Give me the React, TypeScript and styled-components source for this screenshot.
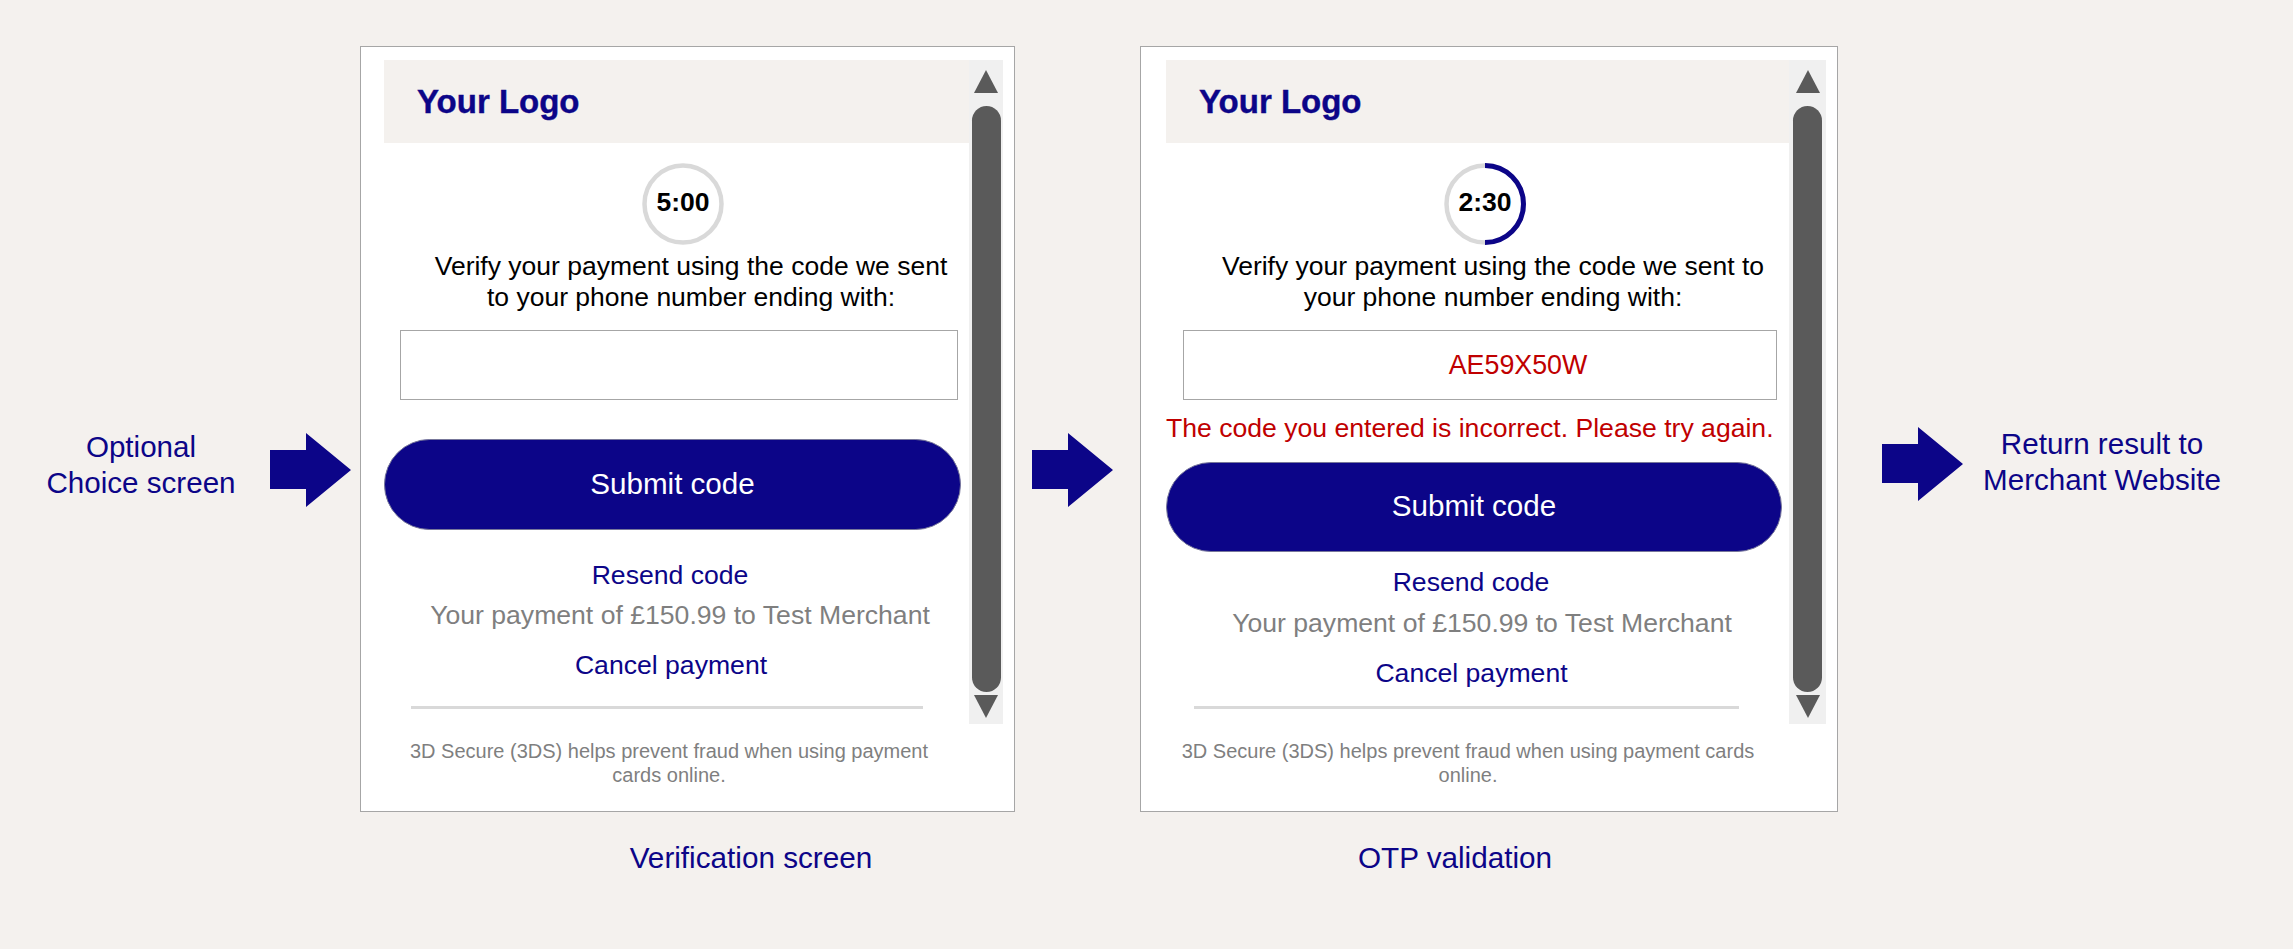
import styled, { createGlobalStyle } from "styled-components";

const NAVY = "#0c0588";
const RED = "#c00000";
const GREY_TEXT = "#7f7f7f";

const GlobalStyle = createGlobalStyle`
  html, body {
    margin: 0;
    padding: 0;
    background: #f4f1ee;
  }
  body {
    font-family: "Liberation Sans", Arial, sans-serif;
  }
  * {
    box-sizing: border-box;
  }
`;

const Page = styled.div`
  width: 2293px;
  height: 949px;
  display: flex;
  align-items: flex-start;
  background: #f4f1ee;
  overflow: hidden;
`;

const SideLabel = styled.div<{ $top: number; $ml: number; $width: number }>`
  margin-top: ${(p) => p.$top}px;
  margin-left: ${(p) => p.$ml}px;
  width: ${(p) => p.$width}px;
  flex-shrink: 0;
  text-align: center;
  color: ${NAVY};
  font-size: 29.6px;
  line-height: 36px;
`;

const ArrowBox = styled.div<{ $top: number; $ml: number }>`
  margin-top: ${(p) => p.$top}px;
  margin-left: ${(p) => p.$ml}px;
  flex-shrink: 0;
  display: flex;
  svg {
    display: block;
  }
`;

const ScreenGroup = styled.div<{ $ml: number; $width: number }>`
  margin-top: 46px;
  margin-left: ${(p) => p.$ml}px;
  width: ${(p) => p.$width}px;
  flex-shrink: 0;
  display: flex;
  flex-direction: column;
`;

const Panel = styled.div<{ $padLeft: number }>`
  height: 766px;
  background: #ffffff;
  border: 1px solid #a6a6a6;
  padding: 13px 11px 0 ${(p) => p.$padLeft}px;
  display: flex;
  flex-direction: column;
`;

const Viewport = styled.div`
  height: 664px;
  display: flex;
  flex-shrink: 0;
`;

const Column = styled.div<{ $width: number }>`
  width: ${(p) => p.$width}px;
  flex-shrink: 0;
  display: flex;
  flex-direction: column;
`;

const LogoBar = styled.div`
  height: 83px;
  background: #f4f1ee;
  display: flex;
  align-items: center;
  padding-left: 33px;
`;

const Logo = styled.div`
  color: ${NAVY};
  font-weight: bold;
  font-size: 33px;
  line-height: 1;
  -webkit-text-stroke: 0.4px ${NAVY};
`;

const Shifted = styled.div<{ $shift: number; $mt: number }>`
  margin-top: ${(p) => p.$mt}px;
  padding-left: ${(p) => (p.$shift > 0 ? p.$shift * 2 : 0)}px;
  padding-right: ${(p) => (p.$shift < 0 ? -p.$shift * 2 : 0)}px;
  display: flex;
  justify-content: center;
`;

const TimerRing = styled.div`
  width: 82px;
  height: 82px;
  display: grid;
  place-items: center;
  svg {
    grid-area: 1 / 1;
  }
`;

const TimerText = styled.span`
  grid-area: 1 / 1;
  font-weight: bold;
  font-size: 26.5px;
  color: #000;
  padding-bottom: 3px;
`;

const Prompt = styled.div`
  text-align: center;
  font-size: 26.5px;
  line-height: 31px;
  color: #000;
`;

const CodeBox = styled.div<{ $ml: number; $width: number; $shift: number }>`
  margin-top: 17px;
  margin-left: ${(p) => p.$ml}px;
  width: ${(p) => p.$width}px;
  height: 70px;
  border: 1.5px solid #a6a6a6;
  display: flex;
  align-items: center;
  justify-content: center;
  padding-left: ${(p) => p.$shift * 2}px;
  color: ${RED};
  font-size: 26.8px;
`;

const ErrorText = styled.div`
  margin-top: 13px;
  font-size: 26.6px;
  line-height: 31px;
  color: ${RED};
  white-space: nowrap;
`;

const SubmitButton = styled.button<{ $mt: number; $width: number; $height: number }>`
  margin-top: ${(p) => p.$mt}px;
  width: ${(p) => p.$width}px;
  height: ${(p) => p.$height}px;
  border-radius: ${(p) => p.$height / 2}px;
  border: 1px solid #77779a;
  background: ${NAVY};
  color: #ffffff;
  font-family: "Liberation Sans", Arial, sans-serif;
  font-size: 29.6px;
  padding: 0 0 2px;
  cursor: pointer;
`;

const LineText = styled.span<{ $muted?: boolean }>`
  font-size: 26.6px;
  line-height: 31px;
  color: ${(p) => (p.$muted ? GREY_TEXT : NAVY)};
  white-space: nowrap;
`;

const Divider = styled.div<{ $mt: number; $ml: number; $width: number }>`
  margin-top: ${(p) => p.$mt}px;
  margin-left: ${(p) => p.$ml}px;
  width: ${(p) => p.$width}px;
  height: 3px;
  background: #d9d9d9;
`;

const Scrollbar = styled.div<{ $width: number }>`
  width: ${(p) => p.$width}px;
  flex-shrink: 0;
  background: #f0f0f0;
  display: flex;
  flex-direction: column;
  align-items: center;
  padding-top: 10px;
`;

const Thumb = styled.div`
  margin: 13px 0 3px;
  width: 29px;
  height: 586px;
  border-radius: 15px;
  background: #5a5a5a;
`;

const Footer = styled.div<{ $ml: number; $width: number }>`
  margin-top: 15px;
  margin-left: ${(p) => p.$ml}px;
  width: ${(p) => p.$width}px;
  text-align: center;
  font-size: 20px;
  line-height: 24px;
  color: ${GREY_TEXT};
`;

const Caption = styled.div<{ $shift: number }>`
  margin-top: 28px;
  padding-left: ${(p) => (p.$shift > 0 ? p.$shift * 2 : 0)}px;
  padding-right: ${(p) => (p.$shift < 0 ? -p.$shift * 2 : 0)}px;
  text-align: center;
  color: ${NAVY};
  font-size: 29.7px;
  line-height: 36px;
`;

function FlowArrow() {
  return (
    <svg width="81" height="74" viewBox="0 0 81 74">
      <polygon points="0,17 36,17 36,0 81,37 36,74 36,56 0,56" fill={NAVY} />
    </svg>
  );
}

function ScrollArrow({ down }: { down?: boolean }) {
  return (
    <svg width="24" height="23" viewBox="0 0 24 23">
      <polygon points={down ? "0,0 24,0 12,23" : "12,0 24,23 0,23"} fill="#5a5a5a" />
    </svg>
  );
}

function Timer({ label, half }: { label: string; half: boolean }) {
  return (
    <TimerRing>
      <svg width="82" height="82" viewBox="0 0 82 82">
        <circle cx="41" cy="41" r="38.5" fill="none" stroke="#d9d9d9" strokeWidth="4.5" />
        {half && (
          <path d="M41 2.5 A38.5 38.5 0 0 1 41 79.5" fill="none" stroke={NAVY} strokeWidth="5" />
        )}
      </svg>
      <TimerText>{label}</TimerText>
    </TimerRing>
  );
}

interface IScreen {
  width: number;
  padLeft: number;
  colWidth: number;
  scrollWidth: number;
  timer: string;
  half: boolean;
  timerShift: number;
  prompt: string[];
  promptShift: number;
  input: { ml: number; width: number; value: string; shift: number };
  error?: string;
  button: { mt: number; width: number; height: number };
  resend: { shift: number; mt: number };
  amount: { shift: number; mt: number };
  cancel: { shift: number; mt: number };
  divider: { mt: number; ml: number; width: number };
  footer: { ml: number; width: number };
  caption: string;
  captionShift: number;
  groupMl: number;
}

const screens: IScreen[] = [
  {
    width: 655,
    padLeft: 23,
    colWidth: 585,
    scrollWidth: 34,
    timer: "5:00",
    half: false,
    timerShift: 6.5,
    prompt: ["Verify your payment using the code we sent", "to your phone number ending with:"],
    promptShift: 14.5,
    input: { ml: 16, width: 558, value: "", shift: 0 },
    button: { mt: 39, width: 577, height: 91 },
    resend: { shift: -6.5, mt: 30 },
    amount: { shift: 3.5, mt: 9 },
    cancel: { shift: -5.5, mt: 19 },
    divider: { mt: 25, ml: 27, width: 512 },
    footer: { ml: 15, width: 540 },
    caption: "Verification screen",
    captionShift: 63.5,
    groupMl: 9,
  },
  {
    width: 698,
    padLeft: 25,
    colWidth: 623,
    scrollWidth: 37,
    timer: "2:30",
    half: true,
    timerShift: 7.5,
    prompt: ["Verify your payment using the code we sent to", "your phone number ending with:"],
    promptShift: 15.5,
    input: { ml: 17, width: 594, value: "AE59X50W", shift: 38 },
    error: "The code you entered is incorrect. Please try again.",
    button: { mt: 18, width: 616, height: 90 },
    resend: { shift: -6.5, mt: 15 },
    amount: { shift: 4.5, mt: 10 },
    cancel: { shift: -6, mt: 19 },
    divider: { mt: 17, ml: 28, width: 545 },
    footer: { ml: 2, width: 600 },
    caption: "OTP validation",
    captionShift: -34,
    groupMl: 27,
  },
];

function Screen({ s }: { s: IScreen }) {
  return (
    <ScreenGroup $ml={s.groupMl} $width={s.width}>
      <Panel $padLeft={s.padLeft}>
        <Viewport>
          <Column $width={s.colWidth}>
            <LogoBar>
              <Logo>Your Logo</Logo>
            </LogoBar>
            <Shifted $shift={s.timerShift} $mt={20}>
              <Timer label={s.timer} half={s.half} />
            </Shifted>
            <Shifted $shift={s.promptShift} $mt={6}>
              <Prompt>
                {s.prompt[0]}
                <br />
                {s.prompt[1]}
              </Prompt>
            </Shifted>
            <CodeBox $ml={s.input.ml} $width={s.input.width} $shift={s.input.shift}>
              {s.input.value}
            </CodeBox>
            {s.error && <ErrorText>{s.error}</ErrorText>}
            <SubmitButton $mt={s.button.mt} $width={s.button.width} $height={s.button.height}>
              Submit code
            </SubmitButton>
            <Shifted $shift={s.resend.shift} $mt={s.resend.mt}>
              <LineText>Resend code</LineText>
            </Shifted>
            <Shifted $shift={s.amount.shift} $mt={s.amount.mt}>
              <LineText $muted>Your payment of £150.99 to Test Merchant</LineText>
            </Shifted>
            <Shifted $shift={s.cancel.shift} $mt={s.cancel.mt}>
              <LineText>Cancel payment</LineText>
            </Shifted>
            <Divider $mt={s.divider.mt} $ml={s.divider.ml} $width={s.divider.width} />
          </Column>
          <Scrollbar $width={s.scrollWidth}>
            <ScrollArrow />
            <Thumb />
            <ScrollArrow down />
          </Scrollbar>
        </Viewport>
        <Footer $ml={s.footer.ml} $width={s.footer.width}>
          3D Secure (3DS) helps prevent fraud when using payment cards online.
        </Footer>
      </Panel>
      <Caption $shift={s.captionShift}>{s.caption}</Caption>
    </ScreenGroup>
  );
}

export default function App() {
  return (
    <>
      <GlobalStyle />
      <Page>
        <SideLabel $top={429} $ml={16} $width={250}>
          Optional
          <br />
          Choice screen
        </SideLabel>
        <ArrowBox $top={433} $ml={4}>
          <FlowArrow />
        </ArrowBox>
        <Screen s={screens[0]} />
        <ArrowBox $top={433} $ml={17}>
          <FlowArrow />
        </ArrowBox>
        <Screen s={screens[1]} />
        <ArrowBox $top={427} $ml={44}>
          <FlowArrow />
        </ArrowBox>
        <SideLabel $top={426} $ml={9} $width={260}>
          Return result to
          <br />
          Merchant Website
        </SideLabel>
      </Page>
    </>
  );
}
